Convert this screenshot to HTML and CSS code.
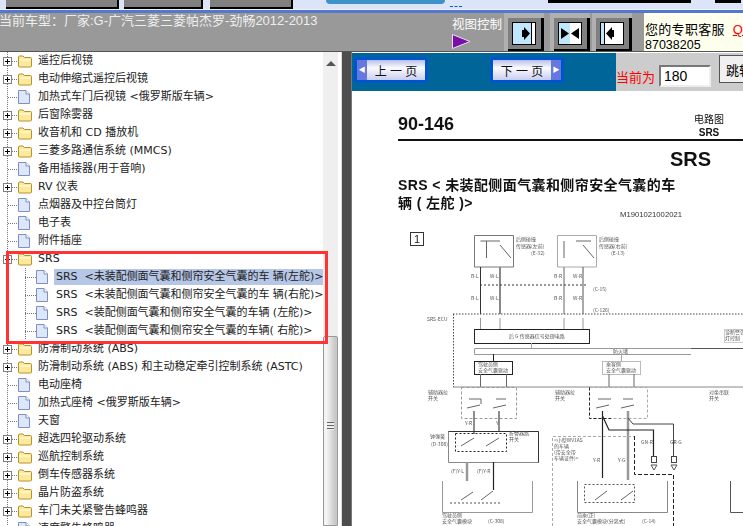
FILE: index.html
```html
<!DOCTYPE html>
<html lang="zh-CN">
<head>
    <meta charset="UTF-8">
    <title>电路图</title>
    <link rel="stylesheet" href="styles.css">
</head>
<body>
    <svg class="defs" width="0" height="0">
        <symbol id="folder" viewBox="0 0 14 13">
            <path d="M0.5 11V2Q0.5 1 1.5 1H5L6.5 2.5H12.5Q13.5 2.5 13.5 3.5V11Q13.5 12 12.5 12H1.5Q0.5 12 0.5 11Z" fill="#fde99a" stroke="#b8902c"/>
            <path d="M1.5 4H12.5V6H1.5Z" fill="#fff6c8"/>
        </symbol>
        <symbol id="file" viewBox="0 0 12 14">
            <path d="M0.5 0.5H8L11.5 4V13.5H0.5Z" fill="#dce8fa" stroke="#7f8fc0"/>
            <path d="M8 0.5V4H11.5" fill="#fff" stroke="#7f8fc0"/>
        </symbol>
        <symbol id="plus" viewBox="0 0 9 9">
            <rect x="0.5" y="0.5" width="8" height="8" fill="#fff" stroke="#808080"/>
            <path d="M2 4.5H7M4.5 2V7" stroke="#000"/>
        </symbol>
    </svg>

    <div class="topstrip">
        <span class="tool t1"></span>
        <span class="tool t2"></span>
        <span class="tool t3"></span>
        <span class="pill"></span>
        <span class="dots"></span>
        <span class="blackbar b1"></span>
        <span class="blackbar b2"></span>
    </div>
    <div class="blueline"></div>

    <div class="header">
        <div class="car">当前车型：厂家:G-广汽三菱三菱帕杰罗-劲畅2012-2013</div>
        <div class="viewctl">
            <div>视图控制</div>
            <svg width="19" height="15" viewBox="0 0 19 15"><path d="M0.5 0.5L18 7.5L0.5 14.5Z" fill="#7a0fa8" stroke="#e8e0f0"/></svg>
        </div>
        <div class="viewbtn"><div class="btn-inner">
            <svg width="24" height="23" viewBox="0 0 24 23"><rect x="0.5" y="0.5" width="23" height="22" fill="#bfe8ff" stroke="#000"/><rect x="20" y="1" width="3" height="21" fill="#fff"/><path d="M19.5 1V22" stroke="#000"/><path d="M10 8H12V5L18 11.500L12 18V15H10Z" fill="#000"/></svg>
        </div></div>
        <div class="viewbtn"><div class="btn-inner">
            <svg width="24" height="23" viewBox="0 0 24 23"><rect x="0.500" y="0.500" width="23" height="22" fill="#fff" stroke="#000"/><rect x="1" y="1" width="11" height="21" fill="#bfe8ff"/><path d="M3 6L11 11.500L3 17Z M21 6L13 11.500L21 17Z" fill="#000"/></svg>
        </div></div>
        <div class="viewbtn"><div class="btn-inner">
            <svg width="24" height="23" viewBox="0 0 24 23"><rect x="0.500" y="0.500" width="23" height="22" fill="#fff" stroke="#000"/><rect x="1" y="1" width="3" height="21" fill="#bfe8ff"/><path d="M4.500 1V22" stroke="#000"/><path d="M14 8H12V5L6 11.500L12 18V15H14Z" fill="#000"/></svg>
        </div></div>
        <div class="service">
            <div>您的专职客服 &nbsp;<span class="qq">QQ</span></div>
            <div class="tel">87038205</div>
        </div>
    </div>

    <div class="main">
        <div class="tree">
            <div class="row"><svg class="plus"><use href="#plus"/></svg><i class="twig"></i><svg class="ico"><use href="#folder"/></svg><span>遥控后视镜</span></div>
            <div class="row"><svg class="plus"><use href="#plus"/></svg><i class="twig"></i><svg class="ico"><use href="#folder"/></svg><span>电动伸缩式遥控后视镜</span></div>
            <div class="row leaf"><i class="twig"></i><svg class="doc-ico"><use href="#file"/></svg><span>加热式车门后视镜 &lt;俄罗斯版车辆&gt;</span></div>
            <div class="row"><svg class="plus"><use href="#plus"/></svg><i class="twig"></i><svg class="ico"><use href="#folder"/></svg><span>后窗除雾器</span></div>
            <div class="row"><svg class="plus"><use href="#plus"/></svg><i class="twig"></i><svg class="ico"><use href="#folder"/></svg><span>收音机和 CD 播放机</span></div>
            <div class="row"><svg class="plus"><use href="#plus"/></svg><i class="twig"></i><svg class="ico"><use href="#folder"/></svg><span>三菱多路通信系统 (MMCS)</span></div>
            <div class="row leaf"><i class="twig"></i><svg class="doc-ico"><use href="#file"/></svg><span>备用插接器(用于音响)</span></div>
            <div class="row"><svg class="plus"><use href="#plus"/></svg><i class="twig"></i><svg class="ico"><use href="#folder"/></svg><span>RV 仪表</span></div>
            <div class="row leaf"><i class="twig"></i><svg class="doc-ico"><use href="#file"/></svg><span>点烟器及中控台筒灯</span></div>
            <div class="row leaf"><i class="twig"></i><svg class="doc-ico"><use href="#file"/></svg><span>电子表</span></div>
            <div class="row leaf"><i class="twig"></i><svg class="doc-ico"><use href="#file"/></svg><span>附件插座</span></div>
            <div class="row"><svg class="plus"><use href="#plus"/></svg><i class="twig"></i><svg class="ico"><use href="#folder"/></svg><span>SRS</span></div>
            <div class="row child"><i class="twig"></i><svg class="doc-ico"><use href="#file"/></svg><span class="picked">SRS &nbsp;&lt;未装配侧面气囊和侧帘安全气囊的车 辆(左舵)&gt;</span></div>
            <div class="row child"><i class="twig"></i><svg class="doc-ico"><use href="#file"/></svg><span>SRS &nbsp;&lt;未装配侧面气囊和侧帘安全气囊的车 辆(右舵)&gt;</span></div>
            <div class="row child"><i class="twig"></i><svg class="doc-ico"><use href="#file"/></svg><span>SRS &nbsp;&lt;装配侧面气囊和侧帘安全气囊的车辆 (左舵)&gt;</span></div>
            <div class="row child"><i class="twig"></i><svg class="doc-ico"><use href="#file"/></svg><span>SRS &nbsp;&lt;装配侧面气囊和侧帘安全气囊的车辆( 右舵)&gt;</span></div>
            <div class="row"><svg class="plus"><use href="#plus"/></svg><i class="twig"></i><svg class="ico"><use href="#folder"/></svg><span>防滑制动系统 (ABS)</span></div>
            <div class="row"><svg class="plus"><use href="#plus"/></svg><i class="twig"></i><svg class="ico"><use href="#folder"/></svg><span>防滑制动系统 (ABS) 和主动稳定牵引控制系统 (ASTC)</span></div>
            <div class="row leaf"><i class="twig"></i><svg class="doc-ico"><use href="#file"/></svg><span>电动座椅</span></div>
            <div class="row leaf"><i class="twig"></i><svg class="doc-ico"><use href="#file"/></svg><span>加热式座椅 &lt;俄罗斯版车辆&gt;</span></div>
            <div class="row leaf"><i class="twig"></i><svg class="doc-ico"><use href="#file"/></svg><span>天窗</span></div>
            <div class="row"><svg class="plus"><use href="#plus"/></svg><i class="twig"></i><svg class="ico"><use href="#folder"/></svg><span>超选四轮驱动系统</span></div>
            <div class="row"><svg class="plus"><use href="#plus"/></svg><i class="twig"></i><svg class="ico"><use href="#folder"/></svg><span>巡航控制系统</span></div>
            <div class="row"><svg class="plus"><use href="#plus"/></svg><i class="twig"></i><svg class="ico"><use href="#folder"/></svg><span>倒车传感器系统</span></div>
            <div class="row"><svg class="plus"><use href="#plus"/></svg><i class="twig"></i><svg class="ico"><use href="#folder"/></svg><span>晶片防盗系统</span></div>
            <div class="row"><svg class="plus"><use href="#plus"/></svg><i class="twig"></i><svg class="ico"><use href="#folder"/></svg><span>车门未关紧警告蜂鸣器</span></div>
            <div class="row leaf"><i class="twig"></i><svg class="doc-ico"><use href="#file"/></svg><span>速度警告蜂鸣器</span></div>

            <div class="scrollbar">
                <div class="arrow"></div>
                <div class="thumb"><div class="grip"></div></div>
            </div>
            <div class="redbox"></div>
        </div>

        <div class="splitter"></div>

        <div class="viewer">
            <div class="pagebar">
                <div class="nav">
                    <div class="pagebtn prev"><b class="cap">&#9664;</b><span>上 一 页</span></div>
                    <div class="pagebtn next"><span>下 一 页</span><b class="cap">&#9654;</b></div>
                </div>
                <div class="jump">
                    <span class="now">当前为</span>
                    <input class="pageno" value="180">
                    <button class="go">跳转</button>
                </div>
            </div>
            <div class="sheet">
                <div class="sheet-top">
                    <div class="pno">90-146</div>
                    <div class="kind"><div>电路图</div><b>SRS</b></div>
                </div>
                <div class="big">SRS</div>
                <div class="ttl">SRS &lt; 未装配侧面气囊和侧帘安全气囊的车<br>辆 ( 左舵 )&gt;</div>
                <div class="code">M1901021002021</div>

                <svg class="wiring" width="392" height="303" viewBox="351 224 392 303">
                    <rect x="409.500" y="232.500" width="13" height="13" fill="#fff" stroke="#333"/>
                    <text x="413" y="243" font-size="11" fill="#222">1</text>

                    <g fill="none" stroke="#666">
                        <path d="M473.500 267V235.500H512.500V267H473.500Z" stroke="#777"/>
                        <path d="M556.500 267V235.500H595.500V267H556.500Z" stroke="#aaa"/>
                        <path d="M479.500 241H499M485.500 241V258M510 258L499 245M563 241V258M575 241H590M593 258L582 245"/>
                        <path d="M479.500 267V314" stroke="#333"/>
                        <path d="M499 267V314" stroke="#888" stroke-width="2"/>
                        <path d="M563 267V314" stroke="#999" stroke-width="1.500"/>
                        <path d="M582 267V314" stroke="#555"/>
                        <path d="M479.500 318V329M499 318V329M563 318V329M582 318V329" stroke="#999"/>
                        <path d="M479 285H585" stroke="#333" stroke-dasharray="2 2"/>
                        <path d="M452 314H743M452.500 314V387" stroke="#444" stroke-dasharray="1.500 1.500"/>
                        <rect x="473.500" y="329.500" width="115" height="14" stroke="#222"/>
                        <path d="M473.500 348.500H743M473.500 354.500H690M473.500 348.500V354.500" stroke="#999"/>
                        <path d="M690 348.500H743" stroke="#555"/>
                        <path d="M530.500 343V348" stroke="#aaa"/>
                        <path d="M492.500 354V361" stroke="#222"/>
                        <path d="M620.500 354V361" stroke="#aaa"/>
                        <rect x="473.500" y="361.500" width="38" height="13" stroke="#222"/>
                        <rect x="601.500" y="361.500" width="38" height="13" stroke="#bbb"/>
                        <rect x="723.500" y="329.500" width="22" height="13" stroke="#ccc"/>
                        <path d="M479.500 374V387M505.500 374V387M608 374V387M633 374V387" stroke="#666"/>
                        <path d="M452 387H743" stroke="#888"/>
                        <rect x="460.500" y="387.500" width="55" height="31" stroke="#999" stroke-dasharray="3 2"/>
                        <rect x="588.500" y="387.500" width="58" height="31" stroke="#aaa" stroke-dasharray="3 2"/>
                        <path d="M588.500 387.500V418.500H610" stroke="#222" stroke-dasharray="3 2"/>
                        <path d="M466 408L479 405M492 408L505 405M468 399H480V404M495 399H505M595 408L608 405M620 408L633 405M597 399H610M622 399H632"/>
                        <path d="M473 411V434M498 411V431" stroke="#444" stroke-width="1.200"/>
                        <path d="M447.500 431.500H537.500V462.500H447.500Z" stroke="#888"/>
                        <path d="M447.500 431.500H537.500V462.500" stroke="#333"/>
                        <rect x="454.500" y="433.500" width="51" height="18" stroke="#222" stroke-dasharray="2 2"/>
                        <path d="M460 446L473 438M485 446L498 438"/>
                        <path d="M466 462V481" stroke="#999" stroke-width="2.500"/>
                        <path d="M492.500 462V490" stroke="#222" stroke-width="1.200"/>
                        <path d="M441.500 481V512.500H531.500V481" stroke="#999"/>
                        <path d="M449 503H499" stroke="#555" stroke-dasharray="2 2"/>
                        <path d="M460 500L472 492M480 500L492 491"/>
                        <path d="M601.500 411V478" stroke="#222" stroke-width="1.200"/>
                        <path d="M627 411V480" stroke="#999" stroke-width="2.500"/>
                        <path d="M601.500 416L608 430H652.500V456" stroke="#222" stroke-width="1.200"/>
                        <path d="M627 418L632 424H672.500V456" stroke="#444"/>
                        <path d="M551.500 526V436.500H633" stroke="#aaa" stroke-dasharray="3 2"/>
                        <path d="M633.500 436V474.500H672.500V526" stroke="#222" stroke-dasharray="4 2"/>
                        <path d="M576.500 481V512.500H666.500V481" stroke="#888"/>
                        <rect x="583.500" y="484.500" width="50" height="18" stroke="#555" stroke-dasharray="2 2"/>
                        <path d="M594 500L606 491M620 500L632 491"/>
                        <rect x="650.500" y="456.500" width="5" height="6" stroke="#444"/>
                        <rect x="670.500" y="456.500" width="5" height="6" stroke="#444"/>
                        <path d="M650 465H656L653 470ZM670 465H676L673 470Z" stroke="#555"/>
                        <path d="M729.500 481V512.500H743" stroke="#555"/>
                    </g>

                    <g class="tiny">
                        <text x="515" y="241">后侧碰撞</text>
                        <text x="515" y="248">传感器(左前)</text>
                        <text x="530" y="255">(E-32)</text>
                        <text x="598" y="241">后侧碰撞</text>
                        <text x="598" y="248">传感器(右前)</text>
                        <text x="610" y="255">(E-13)</text>
                        <text x="470" y="278">B-L</text>
                        <text x="489" y="278">W-L</text>
                        <text x="553" y="278">B-R</text>
                        <text x="572" y="278">W-R</text>
                        <text x="470" y="300">B-L</text>
                        <text x="489" y="300">W-L</text>
                        <text x="553" y="300">B-R</text>
                        <text x="572" y="300">W-R</text>
                        <text x="592" y="291">(C-15)</text>
                        <text x="592" y="312">(C-126)</text>
                        <text x="426" y="321">SRS-ECU</text>
                        <text x="508" y="338">后 G 传感器信号处理电路</text>
                        <text x="612" y="353">防火墙</text>
                        <text x="477" y="366">驾驶员侧</text>
                        <text x="477" y="372">安全气囊驱动</text>
                        <text x="605" y="366">乘客侧</text>
                        <text x="605" y="372">安全气囊驱动</text>
                        <text x="724" y="334">诊断警告</text>
                        <text x="724" y="340">灯控制</text>
                        <text x="427" y="394">辅助器拉</text>
                        <text x="427" y="400">开关</text>
                        <text x="554" y="394">辅助器拉</text>
                        <text x="554" y="400">开关</text>
                        <text x="708" y="394">对坐串联</text>
                        <text x="708" y="400">开关</text>
                        <text x="429" y="438">钟弹簧</text>
                        <text x="430" y="446">(D-308)</text>
                        <text x="508" y="435">折叠器路</text>
                        <text x="508" y="441">开关</text>
                        <text x="450" y="473">(F)Y-L</text>
                        <text x="476" y="473">(F)Y-R</text>
                        <text x="464" y="425">Y-R</text>
                        <text x="495" y="425">Y</text>
                        <text x="592" y="462">Y-R</text>
                        <text x="617" y="462">Y-G</text>
                        <text x="640" y="444">GN-R</text>
                        <text x="669" y="444">GR-G</text>
                        <text x="553" y="442">&lt;小型WV1AS</text>
                        <text x="553" y="448">的车辆</text>
                        <text x="553" y="454">(带安全带</text>
                        <text x="553" y="460">车辆证件)&gt;</text>
                        <text x="441" y="517">驾驶员侧</text>
                        <text x="441" y="523">安全气囊模块</text>
                        <text x="487" y="523">(C-308)</text>
                        <text x="576" y="517">前乘(正)</text>
                        <text x="576" y="523">安全气囊模块(分离式)</text>
                        <text x="641" y="523">(C-14)</text>
                    </g>
                </svg>
            </div>
        </div>
    </div>
</body>
</html>
```

FILE: styles.css
```css
html, body {
    margin: 0;
    height: 526px;
    overflow: hidden;
}
body {
    font-family: "Liberation Sans", "Noto Sans CJK SC", sans-serif;
    background: #fff;
}
.defs {
    display: block;
    height: 0;
}

/* top strip */
.topstrip {
    display: flex;
    height: 9px;
    background: #dce4f7;
}
.tool {
    height: 7px;
    background: #808080;
    border-right: 2px solid #000;
    border-bottom: 2px solid #000;
}
.t1 { width: 111px; margin-left: 6px; }
.t2 { width: 77px; margin-left: 5px; }
.t3 { width: 81px; margin-left: 7px; }
.pill {
    width: 119px;
    height: 4px;
    margin-left: 33px;
    background: #3d93c9;
    border-radius: 0 0 5px 5px;
}
.dots {
    width: 12px;
    height: 1px;
    margin: 5px 0 0 5px;
    border-bottom: 1px dashed #1155dd;
}
.blackbar {
    height: 3px;
    background: #000;
}
.b1 { width: 143px; margin-left: 86px; }
.b2 { width: 26px; margin-left: 24px; }
.blueline {
    height: 4px;
    background: #5577cc;
    border-top: 1px solid #eef2fb;
    box-sizing: border-box;
}

/* header */
.header {
    display: flex;
    height: 39px;
    background: #999;
    color: #fff;
    font-size: 13px;
    border-bottom: 1px solid #555;
    box-sizing: border-box;
}
.car {
    width: 453px;
    margin-left: -1px;
    color: #eee;
    line-height: 16px;
    white-space: nowrap;
}
.viewctl {
    width: 52px;
    padding-top: 4px;
    font-size: 12.500px;
    line-height: 16px;
    white-space: nowrap;
}
.viewctl svg {
    display: block;
    margin-top: 1px;
}
.viewbtn {
    width: 40px;
    padding-left: 4px;
    box-sizing: border-box;
    background: #b0b0b0;
    margin-right: 6px;
}
.viewbtn + .viewbtn {
    margin-right: 2px;
}
.viewbtn + .viewbtn + .viewbtn {
    margin-right: 12px;
}
.btn-inner {
    box-sizing: border-box;
    width: 36px;
    height: 33px;
    margin-top: 5px;
    padding: 4px 0 0 4px;
    background: #808080;
    border-right: 3px solid #000;
    border-bottom: 2px solid #000;
}
.btn-inner svg {
    display: block;
}
.service {
    flex: 1;
    padding: 9px 0 0 1px;
    background: #ffffee;
    color: #000;
    font-size: 13px;
    letter-spacing: 0.300px;
    line-height: 16px;
    white-space: nowrap;
    overflow: hidden;
}
.tel {
    font-size: 12.500px;
    line-height: 14px;
    letter-spacing: 0;
}
.qq {
    color: #f00;
    text-decoration: underline;
}

/* tree + viewer */
.main {
    display: flex;
    height: 474px;
}
.tree {
    position: relative;
    width: 341px;
    flex-shrink: 0;
    overflow: hidden;
    background: #fff;
}
.row {
    display: flex;
    align-items: center;
    height: 18px;
    padding-left: 3px;
    color: #222;
    font-family: "DejaVu Sans", "Noto Sans CJK SC", sans-serif;
    font-size: 11px;
    white-space: nowrap;
    background: linear-gradient(#777 50%, transparent 50%) 7px 0 / 1px 2px repeat-y;
}
.row span {
    margin-left: 5px;
    padding: 0 1px;
    line-height: 16px;
}
.plus {
    width: 9px;
    height: 9px;
    flex-shrink: 0;
}
.twig {
    width: 6px;
    height: 1px;
    flex-shrink: 0;
    background: repeating-linear-gradient(90deg, #777 0 1px, transparent 1px 2px);
}
.ico {
    width: 14px;
    height: 13px;
    flex-shrink: 0;
}
.doc-ico {
    width: 12px;
    height: 14px;
    flex-shrink: 0;
    margin-right: 2px;
}
.leaf {
    padding-left: 8px;
}
.leaf .twig {
    width: 10px;
}
.child {
    padding-left: 25px;
    background:
        linear-gradient(#777 50%, transparent 50%) 7px 0 / 1px 2px repeat-y,
        linear-gradient(#777 50%, transparent 50%) 25px 0 / 1px 2px repeat-y;
}
.child .twig {
    width: 11px;
}
.child span {
    margin-left: 6px;
    padding-left: 2px;
    letter-spacing: -0.020px;
}
.child .doc-ico {
    margin-right: 0;
}
.picked {
    width: 266px;
    background: #b5c6e6;
}
.scrollbar {
    position: absolute;
    top: 0;
    right: 3px;
    bottom: 0;
    width: 15px;
    background: #efefef;
}
.arrow {
    width: 0;
    margin: 9px 0 0 3px;
    border: 5px solid transparent;
    border-top: 0;
    border-bottom: 5px solid #555;
}
.thumb {
    position: absolute;
    top: 284px;
    left: 0;
    right: 0;
    bottom: 0;
    border: 1px solid #999;
    border-radius: 2px 2px 0 0;
    background: linear-gradient(90deg, #f4f4f4 20%, #c8c8c8 85%);
}
.grip {
    position: absolute;
    top: 85px;
    left: 3px;
    width: 7px;
    height: 8px;
    background: repeating-linear-gradient(#666 0 1px, #eee 1px 3px);
}
.redbox {
    position: absolute;
    left: 6px;
    top: 199px;
    width: 316px;
    height: 87px;
    border: 3px solid #f33;
}
.splitter {
    width: 9px;
    flex-shrink: 0;
    background: #4d4d4d;
    border-left: 1px solid #ddd;
}
.viewer {
    flex: 1;
    min-width: 0;
    padding-top: 1px;
    border-left: 1px solid #777;
    overflow: hidden;
}
.pagebar {
    display: flex;
    height: 38px;
    background: #006699;
}
.nav {
    display: flex;
    flex-shrink: 0;
    width: 264px;
    padding: 4px 0 0 2px;
    box-sizing: border-box;
    gap: 62px;
}
.pagebtn {
    display: flex;
    align-items: center;
    box-sizing: border-box;
    width: 74px;
    height: 26px;
    border: 3px solid #0055cc;
    border-radius: 2px;
    background: linear-gradient(#b8c0ea, #fbfbff 40%, #c9cdee);
    font-size: 12px;
    color: #111;
}
.pagebtn span {
    flex: 1;
    text-align: center;
    white-space: nowrap;
}
.cap {
    width: 10px;
    height: 100%;
    background: #6677dd;
    color: #fff;
    font-size: 7px;
    font-weight: normal;
    line-height: 20px;
    text-align: center;
}
.jump {
    display: flex;
    flex: 1;
    min-width: 0;
    background: #ccc;
}
.now {
    margin: 16px 4px 0 0;
    color: #f00;
    font-size: 13px;
    line-height: 18px;
    white-space: nowrap;
}
.pageno {
    box-sizing: border-box;
    width: 52px;
    height: 22px;
    margin-top: 12px;
    padding: 0 0 0 3px;
    border: 2px solid;
    border-color: #777 #eee #eee #777;
    background: #fff;
    font: 14px "Liberation Sans", sans-serif;
}
.go {
    box-sizing: content-box;
    width: 40px;
    height: 26px;
    margin: 2px 0 0 8px;
    padding: 0 0 0 6px;
    flex-shrink: 0;
    border: 1px solid #555;
    background: #f0f0f0;
    font-size: 13px;
    text-align: left;
}

/* scanned page */
.sheet {
    padding-left: 46px;
    color: #111;
    filter: blur(0.300px);
}
.sheet-top {
    display: flex;
    height: 50px;
    box-sizing: border-box;
    border-bottom: 2px solid #111;
    padding-top: 21px;
}
.pno {
    width: 291px;
    font-size: 18px;
    font-weight: bold;
    line-height: 24px;
}
.kind {
    width: 40px;
    font-size: 10px;
    line-height: 13px;
    text-align: center;
    white-space: nowrap;
    padding-top: 1px;
}
.big {
    margin: 6px 0 0 272px;
    font-size: 20px;
    font-weight: bold;
    line-height: 24px;
}
.ttl {
    width: 300px;
    margin-top: 5px;
    font-size: 14px;
    font-weight: bold;
    letter-spacing: 0.400px;
    line-height: 18px;
    white-space: nowrap;
}
.code {
    margin: -2px 0 0 222px;
    font-size: 7.700px;
    line-height: 10px;
    color: #333;
}
.wiring {
    display: block;
    margin: 4px 0 0 -46px;
}
.tiny {
    font-family: "Noto Sans CJK SC", sans-serif;
    font-size: 5px;
    fill: #555;
}
```
